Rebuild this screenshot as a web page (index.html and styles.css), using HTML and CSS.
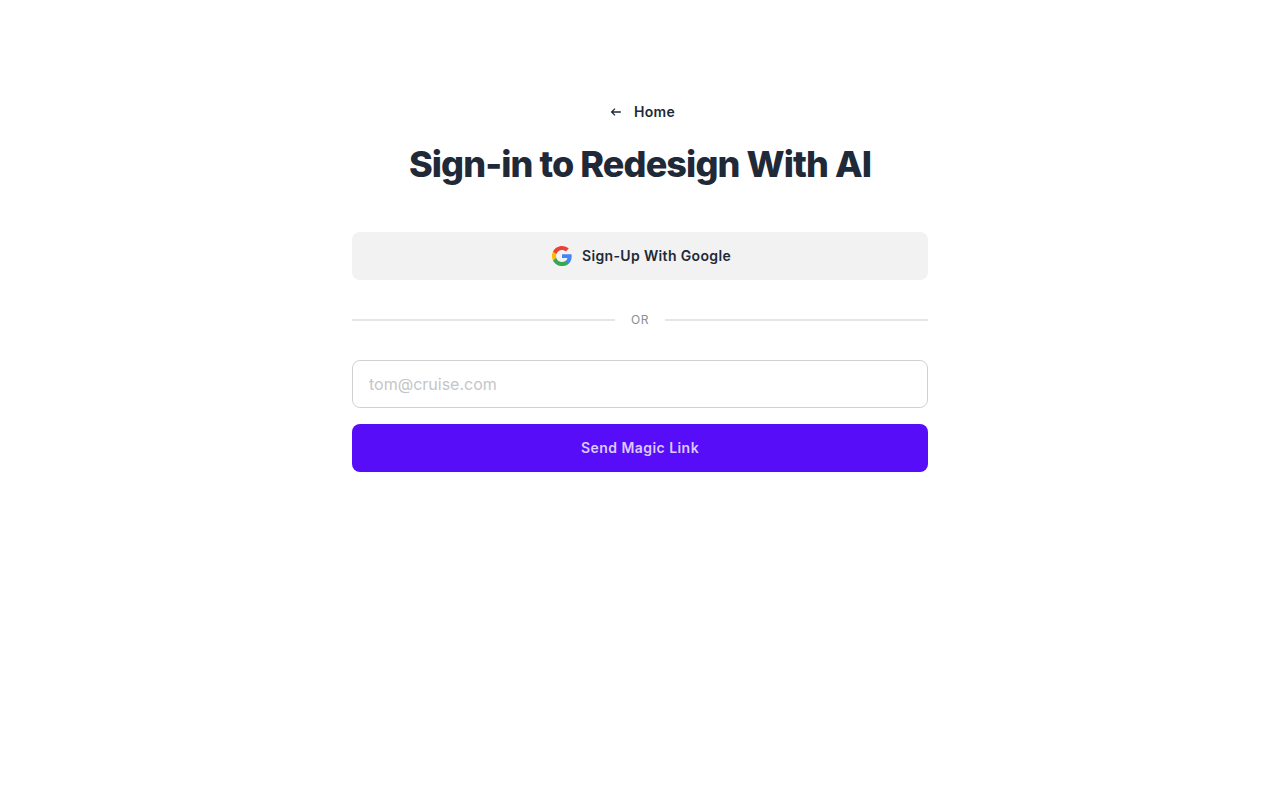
FILE: index.html
```html
<!DOCTYPE html>
<html lang="en">
<head>
    <meta charset="UTF-8">
    <meta name="viewport" content="width=device-width, initial-scale=1.0">
    <title>Sign-in to Redesign With AI</title>
    <link rel="stylesheet" href="styles.css">
</head>
<body>
    <main class="signin">
        <a class="home-link" href="#">
            <svg class="home-arrow" viewBox="0 0 12 12" width="12" height="12" fill="none" stroke="currentColor" stroke-width="1.3">
                <path d="M10.8 6H1.6M5 2.6 1.6 6 5 9.4"/>
            </svg>
            <span>Home</span>
        </a>
        <h1 class="title">Sign-in to Redesign With AI</h1>
        <button class="button button-google" type="button">
            <svg viewBox="0 0 24 24" width="22" height="22">
                <path fill="#4285F4" d="M22.56 12.25c0-.78-.07-1.53-.2-2.25H12v4.26h5.92c-.26 1.37-1.04 2.53-2.21 3.31v2.77h3.57c2.08-1.92 3.28-4.74 3.28-8.09z"/>
                <path fill="#34A853" d="M12 23c2.97 0 5.46-.98 7.28-2.66l-3.57-2.77c-.98.66-2.23 1.06-3.71 1.06-2.86 0-5.29-1.93-6.16-4.53H2.18v2.84C3.99 20.53 7.7 23 12 23z"/>
                <path fill="#FBBC05" d="M5.84 14.09c-.22-.66-.35-1.36-.35-2.09s.13-1.43.35-2.09V7.07H2.18C1.43 8.55 1 10.22 1 12s.43 3.45 1.18 4.93l3.66-2.84z"/>
                <path fill="#EA4335" d="M12 5.38c1.62 0 3.06.56 4.21 1.64l3.15-3.15C17.45 2.09 14.97 1 12 1 7.7 1 3.99 3.47 2.18 7.07l3.66 2.84c.87-2.6 3.3-4.53 6.16-4.53z"/>
            </svg>
            <span>Sign-Up With Google</span>
        </button>
        <div class="divider">
            <span class="divider-line"></span>
            <span class="divider-text">OR</span>
            <span class="divider-line"></span>
        </div>
        <form class="magic-form">
            <input class="email-input" type="email" placeholder="tom@cruise.com">
            <button class="button button-primary" type="button">Send Magic Link</button>
        </form>
    </main>
</body>
</html>
```

FILE: styles.css
```css
/* Sign-in page */
body {
    margin: 0;
    background-color: #fff;
    font-family: Inter, "Liberation Sans", sans-serif;
    color: #1f2937;
}
.signin {
    width: 576px;
    margin: 0 auto;
    padding-top: 100px;
    display: flex;
    flex-direction: column;
}
.home-link {
    align-self: center;
    height: 24px;
    margin-left: 5px;
    display: flex;
    align-items: center;
    gap: 12px;
    color: #1f2937;
    font-size: 14px;
    font-weight: 600;
    line-height: 24px;
    letter-spacing: 0.35px;
    text-decoration: none;
}
.title {
    margin: 20px 0 0;
    text-align: center;
    font-size: 36px;
    font-weight: 800;
    line-height: 40px;
    letter-spacing: -0.9px;
}
.button {
    box-sizing: border-box;
    width: 100%;
    height: 48px;
    padding: 0 0 2px;
    display: flex;
    justify-content: center;
    align-items: center;
    border: none;
    border-radius: 8px;
    font-family: inherit;
    font-size: 14px;
    font-weight: 600;
    letter-spacing: 0.35px;
    cursor: pointer;
}
.button-google {
    margin-top: 48px;
    padding-left: 2px;
    gap: 9px;
    background-color: #f2f2f2;
    color: #1f2937;
}
.button-google svg {
    margin-top: 2px;
}
.button-primary {
    letter-spacing: 0.45px;
    background-color: #570df8;
    color: #dcc9ff;
}
.divider {
    height: 16px;
    margin: 32px 0;
    display: flex;
    align-items: center;
    gap: 16px;
}
.divider-line {
    flex: 1;
    height: 2px;
    background-color: #e5e6e6;
}
.divider-text {
    font-size: 12px;
    line-height: 16px;
    letter-spacing: 0.5px;
    color: #8a8f96;
}
.magic-form {
    display: flex;
    flex-direction: column;
    gap: 16px;
}
.email-input {
    box-sizing: border-box;
    width: 100%;
    height: 48px;
    padding: 0 16px;
    border: 1px solid #d1d2d3;
    border-radius: 8px;
    background-color: #fff;
    font-family: inherit;
    font-size: 16px;
    color: #1f2937;
}
.email-input::placeholder {
    color: #c4c6c9;
}
```
